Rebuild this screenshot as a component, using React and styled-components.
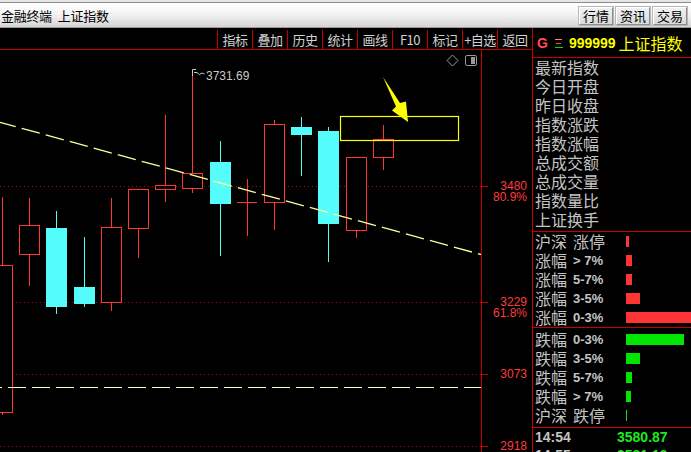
import React from "react";
import styled, { createGlobalStyle } from "styled-components";

const LINE = "#c40000";
const GRAY = "#c4c4c4";
const UP = "#ff3434";
const DOWN = "#54fcfc";
const GREEN = "#00e600";
const CJK = `"Noto Sans CJK SC", "Noto Sans", sans-serif`;
const LATIN = `"Liberation Sans", Arial, sans-serif`;

const GlobalStyle = createGlobalStyle`
  html, body { margin: 0; padding: 0; background: #000; }
  body { font-family: "Noto Sans CJK SC", "Noto Sans", sans-serif; }
  * { box-sizing: border-box; }
`;

const Frame = styled.div`
  width: 691px;
  height: 452px;
  display: flex;
  flex-direction: column;
  overflow: hidden;
  background: #000;
`;

const TitleBar = styled.div`
  flex: none;
  height: 28px;
  display: flex;
  align-items: center;
  justify-content: space-between;
  padding: 4px 4px 0 1px;
  background: linear-gradient(
    to bottom,
    #e6e6e6 0px,
    #e6e6e6 2px,
    #8a8a8a 2px,
    #8a8a8a 3px,
    #ffffff 3px,
    #f4f4f4 14px,
    #d4d4d4 100%
  );
  border-bottom: 1px solid #9a9a9a;
`;

const AppTitle = styled.div`
  display: flex;
  gap: 6px;
  font-family: ${CJK};
  font-size: 13px;
  color: #000;
  letter-spacing: -0.3px;
`;

const TopButtons = styled.div`
  display: flex;
  gap: 3px;
`;

const TopButton = styled.div`
  width: 34px;
  height: 18px;
  display: flex;
  align-items: center;
  justify-content: center;
  font-family: ${CJK};
  font-size: 13px;
  color: #000;
  background: linear-gradient(to bottom, #f2f2f2, #d8d8d8);
  border: 1px solid;
  border-color: #ffffff #8c8c8c #8c8c8c #ffffff;
  box-shadow: 0 0 0 1px #b8b8b8;
`;

const Body = styled.div`
  flex: 1;
  display: flex;
  min-height: 0;
`;

const LeftPane = styled.div`
  width: 532px;
  display: flex;
  flex-direction: column;
`;

const Toolbar = styled.div`
  flex: none;
  height: 22px;
  padding-top: 2px;
  display: flex;
  justify-content: flex-end;
  border-bottom: 1px solid ${LINE};
`;

const Tab = styled.div`
  width: 35px;
  border-left: 1px solid ${LINE};
  display: flex;
  align-items: center;
  justify-content: center;
  font-family: ${CJK};
  font-size: 13px;
  color: #d2d2d2;
  letter-spacing: -0.5px;
`;

const ChartRow = styled.div`
  flex: 1;
  display: flex;
  min-height: 0;
`;

const ChartCanvas = styled.div`
  position: relative;
  width: 481px;
  height: 402px;
  overflow: hidden;
`;

const HighLabel = styled.span`
  position: absolute;
  left: 206px;
  top: 20px;
  font-family: ${LATIN};
  font-size: 12px;
  line-height: 12px;
  color: #c8c8c8;
`;

const CornerIcons = styled.div`
  position: absolute;
  right: 3px;
  top: 4px;
  display: flex;
  gap: 6px;
  align-items: center;
`;

const Axis = styled.div`
  position: relative;
  width: 51px;
  border-left: 1px solid ${LINE};
`;

const AxisTick = styled.div`
  position: absolute;
  left: 0;
  width: 6px;
  height: 1px;
  background: ${LINE};
`;

const AxisLabel = styled.div`
  position: absolute;
  right: 5px;
  font-family: ${LATIN};
  font-size: 12px;
  line-height: 11px;
  color: #ff3c3c;
  text-align: right;
`;

const RightPanel = styled.div`
  flex: 1;
  display: flex;
  flex-direction: column;
  border-left: 1px solid ${LINE};
  overflow: hidden;
`;

const QuoteHeader = styled.div`
  flex: none;
  height: 30px;
  display: flex;
  align-items: center;
  padding-left: 4px;
  border-bottom: 1px solid ${LINE};
`;

const Market = styled.span`
  font-family: ${LATIN};
  font-weight: bold;
  font-size: 14px;
  color: #ff4c4c;
`;

const MenuGlyph = styled.svg`
  margin-left: 7px;
`;

const Code = styled.span`
  margin-left: 6px;
  font-family: ${LATIN};
  font-weight: bold;
  font-size: 14px;
  color: #ffff00;
`;

const Name = styled.span`
  margin-left: 3px;
  font-family: ${CJK};
  font-size: 16px;
  color: #ffff00;
`;

const Section = styled.div`
  flex: none;
  padding: ${(p) => p.$pad || "0 0 0 0"};
  border-bottom: 1px solid ${LINE};
`;

const FieldLabel = styled.div`
  height: 19px;
  line-height: 19px;
  padding-left: 2px;
  font-family: ${CJK};
  font-size: 16px;
  color: ${GRAY};
  white-space: nowrap;
`;

const StatRow = styled.div`
  height: 19px;
  display: flex;
  align-items: center;
`;

const StatLabel = styled.div`
  width: 93px;
  flex: none;
  padding-left: 2px;
  display: flex;
  align-items: center;
  gap: 6px;
  white-space: nowrap;
  color: ${GRAY};
`;

const CjkWord = styled.span`
  font-family: ${CJK};
  font-size: 16px;
  line-height: 19px;
`;

const RangeText = styled.span`
  font-family: ${LATIN};
  font-weight: bold;
  font-size: 13px;
  line-height: 19px;
`;

const Bar = styled.div`
  height: 11px;
  flex: none;
  background: ${(p) => p.$color};
`;

const TickRow = styled.div`
  height: 18px;
  display: flex;
  align-items: center;
  padding-left: 2px;
  font-family: ${LATIN};
  font-weight: bold;
  font-size: 14px;
`;

const TickTime = styled.span`
  width: 82px;
  color: ${GRAY};
`;

const TickValue = styled.span`
  color: #1ee81e;
`;

const candles = [
  { L: -8, R: 12, W: 2, hi: 197, top: 265, bot: 412, lo: 415, up: true },
  { L: 19, R: 39, W: 29, hi: 198, top: 225, bot: 254, lo: 286, up: true },
  { L: 46, R: 67, W: 56, hi: 211, top: 228, bot: 307, lo: 314, up: false },
  { L: 74, R: 95, W: 84, hi: 237, top: 287, bot: 304, lo: 307, up: false },
  { L: 101, R: 121, W: 111, hi: 198, top: 227, bot: 302, lo: 311, up: true },
  { L: 128, R: 148, W: 138, hi: 189, top: 189, bot: 228, lo: 258, up: true },
  { L: 155, R: 175, W: 165, hi: 115, top: 185, bot: 189, lo: 202, up: true },
  { L: 182, R: 202, W: 192, hi: 71, top: 173, bot: 188, lo: 193, up: true },
  { L: 210, R: 231, W: 220, hi: 141, top: 162, bot: 204, lo: 256, up: false },
  { L: 237, R: 257, W: 247, hi: 179, top: 202, bot: 202, lo: 236, doji: true },
  { L: 264, R: 284, W: 274, hi: 120, top: 124, bot: 202, lo: 230, up: true },
  { L: 291, R: 312, W: 301, hi: 117, top: 127, bot: 135, lo: 176, up: false },
  { L: 318, R: 339, W: 328, hi: 127, top: 131, bot: 224, lo: 262, up: false },
  { L: 346, R: 366, W: 356, hi: 157, top: 157, bot: 230, lo: 238, up: true },
  { L: 373, R: 393, W: 383, hi: 125, top: 139, bot: 157, lo: 170, up: true },
];

const gridLines = [186, 302, 374, 446];

const axisMarks = [
  { y: 186, lines: ["3480", "80.9%"] },
  { y: 302, lines: ["3229", "61.8%"] },
  { y: 374, lines: ["3073"] },
  { y: 446, lines: ["2918"] },
];

const tabs = ["指标", "叠加", "历史", "统计", "画线", "F10", "标记", "+自选", "返回"];

const fields = [
  "最新指数",
  "今日开盘",
  "昨日收盘",
  "指数涨跌",
  "指数涨幅",
  "总成交额",
  "总成交量",
  "指数量比",
  "上证换手",
];

const riseStats = [
  { a: "沪深", b: "涨停", cjk: true, w: 3 },
  { a: "涨幅", b: "> 7%", w: 6 },
  { a: "涨幅", b: "5-7%", w: 6 },
  { a: "涨幅", b: "3-5%", w: 14 },
  { a: "涨幅", b: "0-3%", w: 70 },
];

const fallStats = [
  { a: "跌幅", b: "0-3%", w: 58 },
  { a: "跌幅", b: "3-5%", w: 14 },
  { a: "跌幅", b: "5-7%", w: 6 },
  { a: "跌幅", b: "> 7%", w: 5 },
  { a: "沪深", b: "跌停", cjk: true, w: 1 },
];

const ticks = [
  { t: "14:54", v: "3580.87" },
  { t: "14:55", v: "3581.19" },
];

function Candle({ c }) {
  if (c.doji) {
    return (
      <g stroke={UP} strokeWidth="1" shapeRendering="crispEdges">
        <line x1={c.W + 0.5} y1={c.hi} x2={c.W + 0.5} y2={c.lo} />
        <line x1={c.L} y1={c.top + 0.5} x2={c.R} y2={c.top + 0.5} />
      </g>
    );
  }
  if (c.up) {
    return (
      <g stroke={UP} strokeWidth="1" shapeRendering="crispEdges">
        {c.hi < c.top && <line x1={c.W + 0.5} y1={c.hi} x2={c.W + 0.5} y2={c.top} />}
        {c.lo > c.bot && <line x1={c.W + 0.5} y1={c.bot + 1} x2={c.W + 0.5} y2={c.lo} />}
        <rect x={c.L + 0.5} y={c.top + 0.5} width={c.R - c.L} height={c.bot - c.top} fill="#000" />
      </g>
    );
  }
  return (
    <g shapeRendering="crispEdges">
      <line x1={c.W + 0.5} y1={c.hi} x2={c.W + 0.5} y2={c.lo} stroke={DOWN} strokeWidth="1" />
      <rect x={c.L} y={c.top} width={c.R - c.L} height={c.bot - c.top} fill={DOWN} />
    </g>
  );
}

function CandleChart() {
  return (
    <svg width="481" height="402" viewBox="0 50 481 402" style={{ display: "block" }}>
      {gridLines.map((y) => (
        <line
          key={y}
          x1="0"
          x2="481"
          y1={y + 0.5}
          y2={y + 0.5}
          stroke={LINE}
          strokeWidth="1"
          strokeDasharray="1 3"
          shapeRendering="crispEdges"
        />
      ))}
      {candles.map((c, i) => (
        <Candle key={i} c={c} />
      ))}
      <line
        x1="0"
        x2="481"
        y1="387.5"
        y2="387.5"
        stroke="#ffffa8"
        strokeWidth="1"
        strokeDasharray="18 6"
        strokeDashoffset="16"
        shapeRendering="crispEdges"
      />
      <line
        x1="0"
        y1="122.3"
        x2="481"
        y2="254.5"
        stroke="#ffff98"
        strokeWidth="1.3"
        strokeDasharray="18.7 6.2"
        strokeDashoffset="2.4"
      />
      <rect
        x="340.5"
        y="116.5"
        width="118"
        height="24"
        fill="none"
        stroke="#ffff00"
        strokeWidth="1.2"
      />
      <polygon
        points="383,77 400,103 406,101.5 408,122 392,110.5 396,106.5"
        fill="#ffff00"
      />
      <path
        d="M192.5 76 V69.5 H196 M194 72.5 L197 72.5 L199.5 74.5 L202 73 L204.5 74"
        fill="none"
        stroke="#c8c8c8"
        strokeWidth="1"
      />
    </svg>
  );
}

export default function App() {
  return (
    <>
      <GlobalStyle />
      <Frame>
        <TitleBar>
          <AppTitle>
            <span>金融终端</span>
            <span>上证指数</span>
          </AppTitle>
          <TopButtons>
            <TopButton>行情</TopButton>
            <TopButton>资讯</TopButton>
            <TopButton>交易</TopButton>
          </TopButtons>
        </TitleBar>
        <Body>
          <LeftPane>
            <Toolbar>
              {tabs.map((t) => (
                <Tab key={t}>{t}</Tab>
              ))}
            </Toolbar>
            <ChartRow>
              <ChartCanvas>
                <CandleChart />
                <HighLabel>3731.69</HighLabel>
                <CornerIcons>
                  <svg width="13" height="13" viewBox="0 0 13 13">
                    <path d="M6.5 1 L12 6.5 L6.5 12 L1 6.5 Z" fill="none" stroke="#9a9a9a" strokeWidth="1" />
                  </svg>
                  <svg width="13" height="12" viewBox="0 0 13 12">
                    <rect x="0.5" y="0.5" width="11" height="10" rx="1.5" fill="none" stroke="#9a9a9a" />
                    <rect x="6" y="2" width="4" height="7" fill="#9a9a9a" />
                  </svg>
                </CornerIcons>
              </ChartCanvas>
              <Axis>
                {axisMarks.map((m) => (
                  <React.Fragment key={m.y}>
                    <AxisTick style={{ top: m.y - 50 }} />
                    <AxisLabel style={{ top: m.y - 50 - 5 }}>
                      {m.lines.map((l) => (
                        <div key={l}>{l}</div>
                      ))}
                    </AxisLabel>
                  </React.Fragment>
                ))}
              </Axis>
            </ChartRow>
          </LeftPane>
          <RightPanel>
            <QuoteHeader>
              <Market>G</Market>
              <MenuGlyph width="8" height="12" viewBox="0 0 8 12">
                <rect x="0" y="2" width="7" height="1" fill="#ff8080" />
                <rect x="1" y="6" width="5" height="1" fill="#ff5050" />
                <rect x="0" y="10" width="8" height="1" fill="#00e000" />
              </MenuGlyph>
              <Code>999999</Code>
              <Name>上证指数</Name>
            </QuoteHeader>
            <Section $pad="0 0 2px 0">
              {fields.map((f) => (
                <FieldLabel key={f}>{f}</FieldLabel>
              ))}
            </Section>
            <Section>
              {riseStats.map((s, i) => (
                <StatRow key={i}>
                  <StatLabel>
                    <CjkWord>{s.a}</CjkWord>
                    {s.cjk ? <CjkWord>{s.b}</CjkWord> : <RangeText>{s.b}</RangeText>}
                  </StatLabel>
                  <Bar $color={UP} style={{ width: s.w }} />
                </StatRow>
              ))}
            </Section>
            <Section $pad="2px 0 2px 0">
              {fallStats.map((s, i) => (
                <StatRow key={i}>
                  <StatLabel>
                    <CjkWord>{s.a}</CjkWord>
                    {s.cjk ? <CjkWord>{s.b}</CjkWord> : <RangeText>{s.b}</RangeText>}
                  </StatLabel>
                  <Bar $color={GREEN} style={{ width: s.w }} />
                </StatRow>
              ))}
            </Section>
            <div>
              {ticks.map((k) => (
                <TickRow key={k.t}>
                  <TickTime>{k.t}</TickTime>
                  <TickValue>{k.v}</TickValue>
                </TickRow>
              ))}
            </div>
          </RightPanel>
        </Body>
      </Frame>
    </>
  );
}
